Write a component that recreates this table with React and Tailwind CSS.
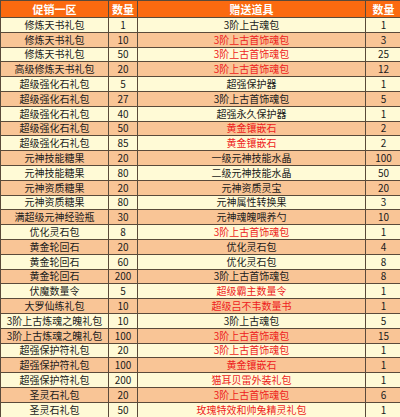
import React from "react";

const rows = [
  ["修炼天书礼包", "1", "3阶上古魂包", "1", false],
  ["修炼天书礼包", "10", "3阶上古首饰魂包", "3", true],
  ["修炼天书礼包", "50", "3阶上古首饰魂包", "25", true],
  ["高级修炼天书礼包", "20", "3阶上古首饰魂包", "12", true],
  ["超级强化石礼包", "5", "超强保护器", "1", false],
  ["超级强化石礼包", "27", "3阶上古首饰魂包", "5", false],
  ["超级强化石礼包", "40", "超强永久保护器", "1", false],
  ["超级强化石礼包", "50", "黄金镶嵌石", "2", true],
  ["超级强化石礼包", "85", "黄金镶嵌石", "2", true],
  ["元神技能糖果", "20", "一级元神技能水晶", "100", false],
  ["元神技能糖果", "80", "二级元神技能水晶", "50", false],
  ["元神资质糖果", "20", "元神资质灵宝", "20", false],
  ["元神资质糖果", "80", "元神属性转换果", "3", false],
  ["满超级元神经验瓶", "30", "元神魂魄喂养勺", "10", false],
  ["优化灵石包", "8", "3阶上古首饰魂包", "1", true],
  ["黄金轮回石", "20", "优化灵石包", "4", false],
  ["黄金轮回石", "60", "优化灵石包", "8", false],
  ["黄金轮回石", "200", "3阶上古首饰魂包", "8", false],
  ["伏魔数量令", "5", "超级霸主数量令", "1", true],
  ["大罗仙练礼包", "10", "超级吕不韦数量书", "1", true],
  ["3阶上古炼魂之魄礼包", "10", "3阶上古魂包", "5", false],
  ["3阶上古炼魂之魄礼包", "100", "3阶上古首饰魂包", "15", true],
  ["超强保护符礼包", "20", "3阶上古首饰魂包", "1", true],
  ["超强保护符礼包", "100", "黄金镶嵌石", "1", true],
  ["超强保护符礼包", "200", "猫耳贝雷外装礼包", "1", true],
  ["圣灵石礼包", "20", "3阶上古首饰魂包", "6", true],
  ["圣灵石礼包", "50", "玫瑰特效和帅兔精灵礼包", "1", true],
];

const cell = "border border-[#5a4a3a] text-center p-0 whitespace-nowrap overflow-hidden";

export default function App() {
  return (
    <div className="w-[400px] h-[417px] overflow-hidden bg-white">
      <table
        className="w-[401px] border-collapse table-fixed text-[10px] leading-none text-[#1a1a1a]"
        style={{ fontFamily: '"Noto Sans CJK SC", "DejaVu Sans", sans-serif' }}
      >
        <colgroup>
          <col className="w-[108px]" />
          <col className="w-[29px]" />
          <col className="w-[228px]" />
          <col className="w-[36px]" />
        </colgroup>
        <thead>
          <tr className="h-[17px] bg-[#fb6a10] text-white font-bold text-[11px]">
            <td className={cell}>促销一区</td>
            <td className={cell}>数量</td>
            <td className={cell}>赠送道具</td>
            <td className={cell}>数量</td>
          </tr>
        </thead>
        <tbody>
          {rows.map((r, i) => (
            <tr
              key={i}
              className={`h-[14.8px] ${i % 2 === 0 ? "bg-[#fffad6]" : "bg-[#f9c596]"}`}
            >
              <td className={cell}>{r[0]}</td>
              <td className={cell}>{r[1]}</td>
              <td className={`${cell} ${r[4] ? "text-[#ee1c1c]" : ""}`}>{r[2]}</td>
              <td className={cell}>{r[3]}</td>
            </tr>
          ))}
        </tbody>
      </table>
    </div>
  );
}
